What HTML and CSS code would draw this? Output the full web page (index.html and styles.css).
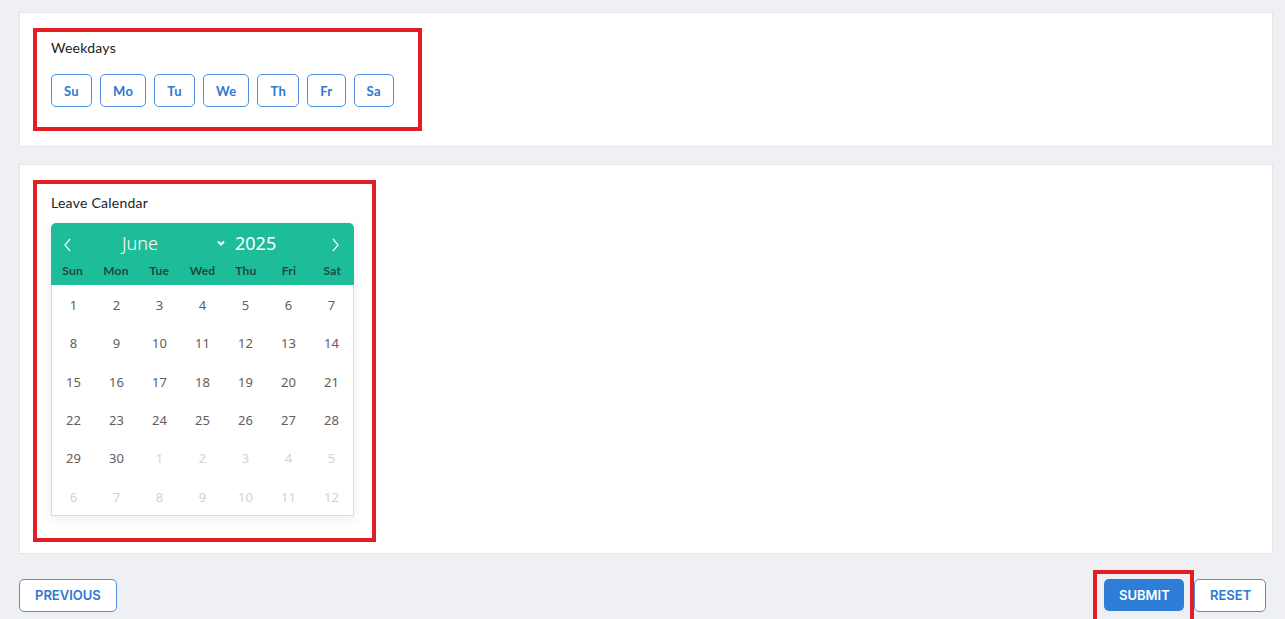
FILE: index.html
```html
<!DOCTYPE html>
<html lang="en">
<head>
    <meta charset="UTF-8">
    <meta name="viewport" content="width=device-width, initial-scale=1.0">
    <title>Leave Request</title>
    <link rel="stylesheet" href="styles.css">
</head>
<body>
    <div class="card">
        <div class="mark mark-week">
            <p class="label">Weekdays</p>
            <div class="days">
                <button class="day-btn">Su</button>
                <button class="day-btn">Mo</button>
                <button class="day-btn">Tu</button>
                <button class="day-btn">We</button>
                <button class="day-btn">Th</button>
                <button class="day-btn">Fr</button>
                <button class="day-btn">Sa</button>
            </div>
        </div>
    </div>

    <div class="card card-cal">
        <div class="mark mark-cal">
            <p class="label">Leave Calendar</p>
            <div class="cal">
                <div class="cal-head">
                    <div class="nav-row">
                        <svg class="arrow" width="9" height="14" viewBox="0 0 9 14"><path d="M7 1 L2 7 L7 13" fill="none" stroke="#e8f8f3" stroke-width="1.3"/></svg>
                        <span class="month">June</span>
                        <svg class="drop" width="10" height="7" viewBox="0 0 10 7"><path d="M2 1.5 L5 4.5 L8 1.5" fill="none" stroke="#fff" stroke-width="2"/></svg>
                        <span class="year">2025</span>
                        <svg class="arrow next" width="9" height="14" viewBox="0 0 9 14"><path d="M2 1 L7 7 L2 13" fill="none" stroke="#e8f8f3" stroke-width="1.3"/></svg>
                    </div>
                    <div class="wk-row">
                        <span>Sun</span><span>Mon</span><span>Tue</span><span>Wed</span><span>Thu</span><span>Fri</span><span>Sat</span>
                    </div>
                </div>
                <div class="cal-body" id="calBody"></div>
            </div>
        </div>
    </div>

    <div class="footer">
        <button class="btn btn-line">PREVIOUS</button>
        <div class="right">
            <div class="mark mark-submit">
                <button class="btn btn-fill">SUBMIT</button>
            </div>
            <button class="btn btn-line btn-reset">RESET</button>
        </div>
    </div>

    <script>
        // june 2025 starts on sunday, 30 days
        let body = document.querySelector("#calBody")
        for(let i = 0; i < 42; i++){
            let cell = document.createElement("span")
            let n = i + 1
            if(n > 30){
                n = n - 30
                cell.className = "other"
            }
            cell.textContent = n
            body.appendChild(cell)
        }
    </script>
</body>
</html>
```

FILE: styles.css
```css
*{
    margin: 0;
    padding: 0;
    box-sizing: border-box;
}
body{
    background-color: #eff0f3;
    padding: 12px 12px 0 19px;
    font-family: "Noto Sans", "Lato", sans-serif;
    color: #2b2b2b;
    overflow: hidden;
    height: 619px;
}
.card{
    background-color: #fff;
    border: 1px solid #e3e5e9;
    padding: 15px 13px;
}
.card-cal{
    margin-top: 17px;
    padding-bottom: 11px;
}
.mark{
    border: 4px solid #e21d23;
}
.mark-week{
    width: 389px;
    padding: 6px 14px 20px;
}
.mark-cal{
    width: 343px;
    padding: 9px 14px 22px;
}
.label{
    font-family: "Lato", sans-serif;
    font-size: 14px;
    letter-spacing: 0.25px;
    line-height: 20px;
    font-weight: 400;
    color: #222;
}
.days{
    display: flex;
    gap: 8px;
    margin-top: 16px;
}
.day-btn{
    height: 33px;
    padding: 0 12px;
    background: #fff;
    border: 1px solid #4d8fdc;
    border-radius: 5px;
    color: #2f78d0;
    font-family: "Lato", sans-serif;
    font-weight: 700;
    font-size: 13px;
    letter-spacing: 0.35px;
}
.cal{
    width: 303px;
    margin-top: 10px;
    box-shadow: 0 3px 10px rgba(0,0,0,0.08);
}
.cal-head{
    background-color: #1dbd9a;
    border-radius: 5px 5px 0 0;
}
.nav-row{
    display: flex;
    align-items: center;
    height: 40px;
    padding: 0 14px 0 12px;
    color: #fff;
}
.arrow{
    margin-top: 4px;
}
.month{
    width: 136px;
    text-align: center;
    font-size: 18px;
    font-weight: 300;
}
.drop{
    margin-left: 8px;
}
.year{
    margin-left: 9px;
    font-size: 18px;
    font-weight: 400;
}
.next{
    margin-left: auto;
}
.wk-row{
    display: grid;
    grid-template-columns: repeat(7, 1fr);
    height: 22px;
    padding-bottom: 6px;
    text-align: center;
    font-family: "Lato", sans-serif;
    font-size: 12px;
    font-weight: 700;
    letter-spacing: 0.2px;
    line-height: 16px;
    color: #1c4a40;
}
.cal-body{
    display: grid;
    grid-template-columns: repeat(7, 1fr);
    grid-auto-rows: 38.3px;
    border: 1px solid #dcdcdc;
    border-top: none;
    background: #fff;
}
.cal-body span{
    display: flex;
    align-items: center;
    justify-content: center;
    font-size: 13px;
    font-weight: 400;
    color: #606060;
    padding-top: 2px;
}
.cal-body .other{
    color: #d2d2d2;
}
.footer{
    display: flex;
    justify-content: space-between;
    align-items: flex-start;
    margin-top: 16px;
}
.right{
    display: flex;
    align-items: flex-start;
    margin-right: 7px;
}
.mark-submit{
    padding: 5px 6px 12px 7px;
}
.btn{
    height: 33px;
    border-radius: 5px;
    font-family: "Inter", "Roboto", sans-serif;
    font-weight: 600;
    font-size: 13px;
    padding: 0 15px;
}
.btn-line{
    background: #fff;
    color: #2f78d0;
    border: 1px solid #4d8fdc;
    margin-top: 9px;
}
.btn-fill{
    background: #2e7dd6;
    color: #fff;
    border: none;
    width: 80px;
    height: 32px;
}
.btn-reset{
    width: 72px;
}
```
